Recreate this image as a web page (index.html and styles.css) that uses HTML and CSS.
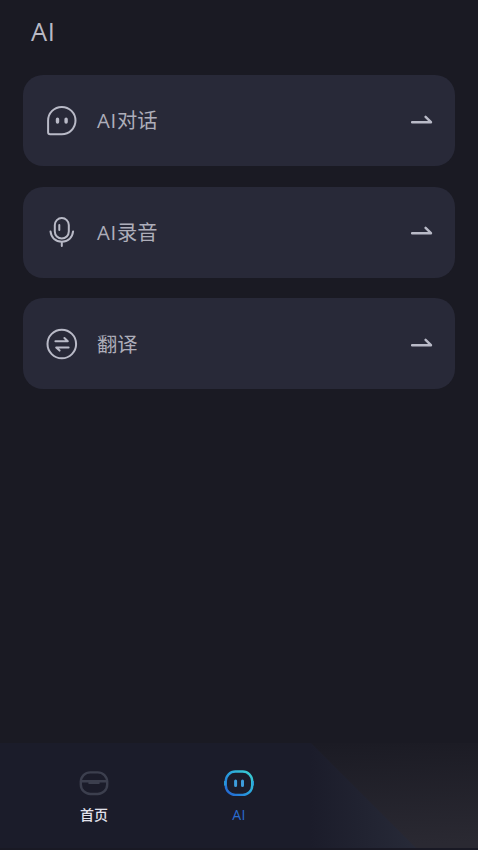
FILE: index.html
```html
<!DOCTYPE html>
<html lang="zh-CN">
<head>
<meta charset="utf-8">
<meta name="viewport" content="width=device-width, initial-scale=1">
<title>AI</title>
<link rel="stylesheet" href="styles.css">
</head>
<body>
<div class="app">
  <h1 class="title">AI</h1>
  <main class="list">
    <a class="card">
      <svg class="icon" viewBox="0 0 32 32"><path d="M2.1 15.6A13.7 13.7 0 1 1 15.8 29.3H4.1Q2.1 29.3 2.1 27.3Z"/><path class="eye" d="M11.5 14.3v2.8M20.1 14.3v2.8"/></svg>
      <span class="label"><span class="latin">AI</span>对话</span>
      <svg class="arrow" viewBox="0 0 22 12"><path d="M1 7.2H20L14.6 1.8"/></svg>
    </a>
    <a class="card">
      <svg class="icon" viewBox="0 0 32 32"><rect x="8.8" y="2.1" width="14" height="20.4" rx="7"/><path d="M13.3 9v5M4.5 15.4C5.3 22 9.7 25.7 15.8 25.7S26.3 22 27.1 15.4M15.8 25.7V30"/></svg>
      <span class="label"><span class="latin">AI</span>录音</span>
      <svg class="arrow" viewBox="0 0 22 12"><path d="M1 7.2H20L14.6 1.8"/></svg>
    </a>
    <a class="card">
      <svg class="icon" viewBox="0 0 32 32"><circle cx="15.8" cy="16" r="14.3"/><path d="M9.4 13.2H21.8L18.4 10M22.6 19.4H10.2L13.6 22.6"/></svg>
      <span class="label">翻译</span>
      <svg class="arrow" viewBox="0 0 22 12"><path d="M1 7.2H20L14.6 1.8"/></svg>
    </a>
  </main>
  <nav class="tabs">
    <svg class="glow" viewBox="0 0 478 107" preserveAspectRatio="none">
      <defs>
        <linearGradient id="corner" x1="0.4" y1="0" x2="0.6" y2="1"><stop offset="0" stop-color="#1a1a23"/><stop offset="1" stop-color="#2a2932"/></linearGradient>
        <linearGradient id="panel" gradientUnits="userSpaceOnUse" x1="310" y1="0" x2="418" y2="0"><stop offset="0" stop-color="#1b1c2a"/><stop offset="1" stop-color="#272a38"/></linearGradient>
      </defs>
      <rect width="478" height="107" fill="url(#corner)"/>
      <path d="M0 0H311L418 107H0Z" fill="url(#panel)"/>
    </svg>
    <a class="tab home">
      <svg class="tab-icon" viewBox="0 0 32 28"><rect x="2.8" y="3.4" width="26.4" height="21.6" rx="9.5"/><path d="M3 12.2H29M11.5 13.9H20.5"/></svg>
      <span>首页</span>
    </a>
    <a class="tab active">
      <svg class="tab-icon" viewBox="0 0 32 28">
        <defs><linearGradient id="blue" gradientUnits="userSpaceOnUse" x1="5" y1="25" x2="26" y2="3"><stop offset="0" stop-color="#2368d4"/><stop offset="0.5" stop-color="#299fdd"/><stop offset="1" stop-color="#38cbd2"/></linearGradient></defs>
        <rect x="2.8" y="2.5" width="26.4" height="23.4" rx="9.5" stroke="url(#blue)"/><path class="ears" d="M1.9 12.5v3.4M30.1 12.5v3.4"/><path class="eyes" d="M12.6 12v4.4M19.5 12v4.4"/>
      </svg>
      <span>AI</span>
    </a>
  </nav>
</div>
</body>
</html>
```
FILE: styles.css
```css
* { box-sizing: border-box; }
body {
  margin: 0;
  background: #1a1a23;
  color: #b9b9c3;
  font-family: "Noto Sans CJK SC", "Noto Sans", sans-serif;
}
.app {
  height: 850px;
  display: flex;
  flex-direction: column;
  overflow: hidden;
}
.title {
  margin: 0;
  height: 75px;
  padding: 13px 31px 0;
  font-family: "Open Sans", sans-serif;
  font-size: 25.5px;
  line-height: 36px;
  font-weight: 400;
  letter-spacing: 0.6px;
}
.list {
  flex: 1;
  display: flex;
  flex-direction: column;
  gap: 20.5px;
  padding: 0 23px;
}
.card {
  height: 91px;
  display: flex;
  align-items: center;
  padding: 0 22px 0 23px;
  border-radius: 20px;
  background: #282938;
}
.icon, .arrow {
  fill: none;
  stroke: #b9bac7;
  stroke-width: 2;
  stroke-linecap: round;
  stroke-linejoin: round;
}
.icon { width: 32px; height: 32px; }
.eye { stroke-width: 3.4; }
.arrow { width: 22px; height: 12px; stroke-width: 2.4; }
.label {
  flex: 1;
  margin-left: 19px;
  padding-bottom: 2px;
  font-size: 20.3px;
  line-height: 30px;
  color: #aeaeba;
}
.latin {
  font-family: "Open Sans", sans-serif;
  letter-spacing: 0.7px;
}
.tabs {
  position: relative;
  height: 107px;
  display: grid;
  grid-template-columns: repeat(3, 145px);
  justify-content: center;
  border-bottom: 2px solid #191924;
}
.glow {
  position: absolute;
  inset: 0;
  width: 100%;
  height: 107px;
  z-index: -1;
}
.tab {
  display: flex;
  flex-direction: column;
  align-items: center;
  padding-top: 26px;
  font-size: 14px;
  line-height: 20px;
}
.tab span { margin-top: 7px; }
.tab-icon {
  width: 32px;
  height: 28px;
  fill: none;
  stroke-width: 2.4;
  stroke-linecap: round;
}
.home { color: #e2e2ec; font-weight: 500; }
.home .tab-icon { stroke: #3c3f4e; }
.active {
  color: #2a6bd0;
  font-family: "Open Sans", sans-serif;
  letter-spacing: 0.4px;
}
.active span { margin-top: 8px; }
.ears { stroke: #299fdd; stroke-width: 1.6; }
.eyes { stroke: #3d9ddc; stroke-width: 3; }
```
